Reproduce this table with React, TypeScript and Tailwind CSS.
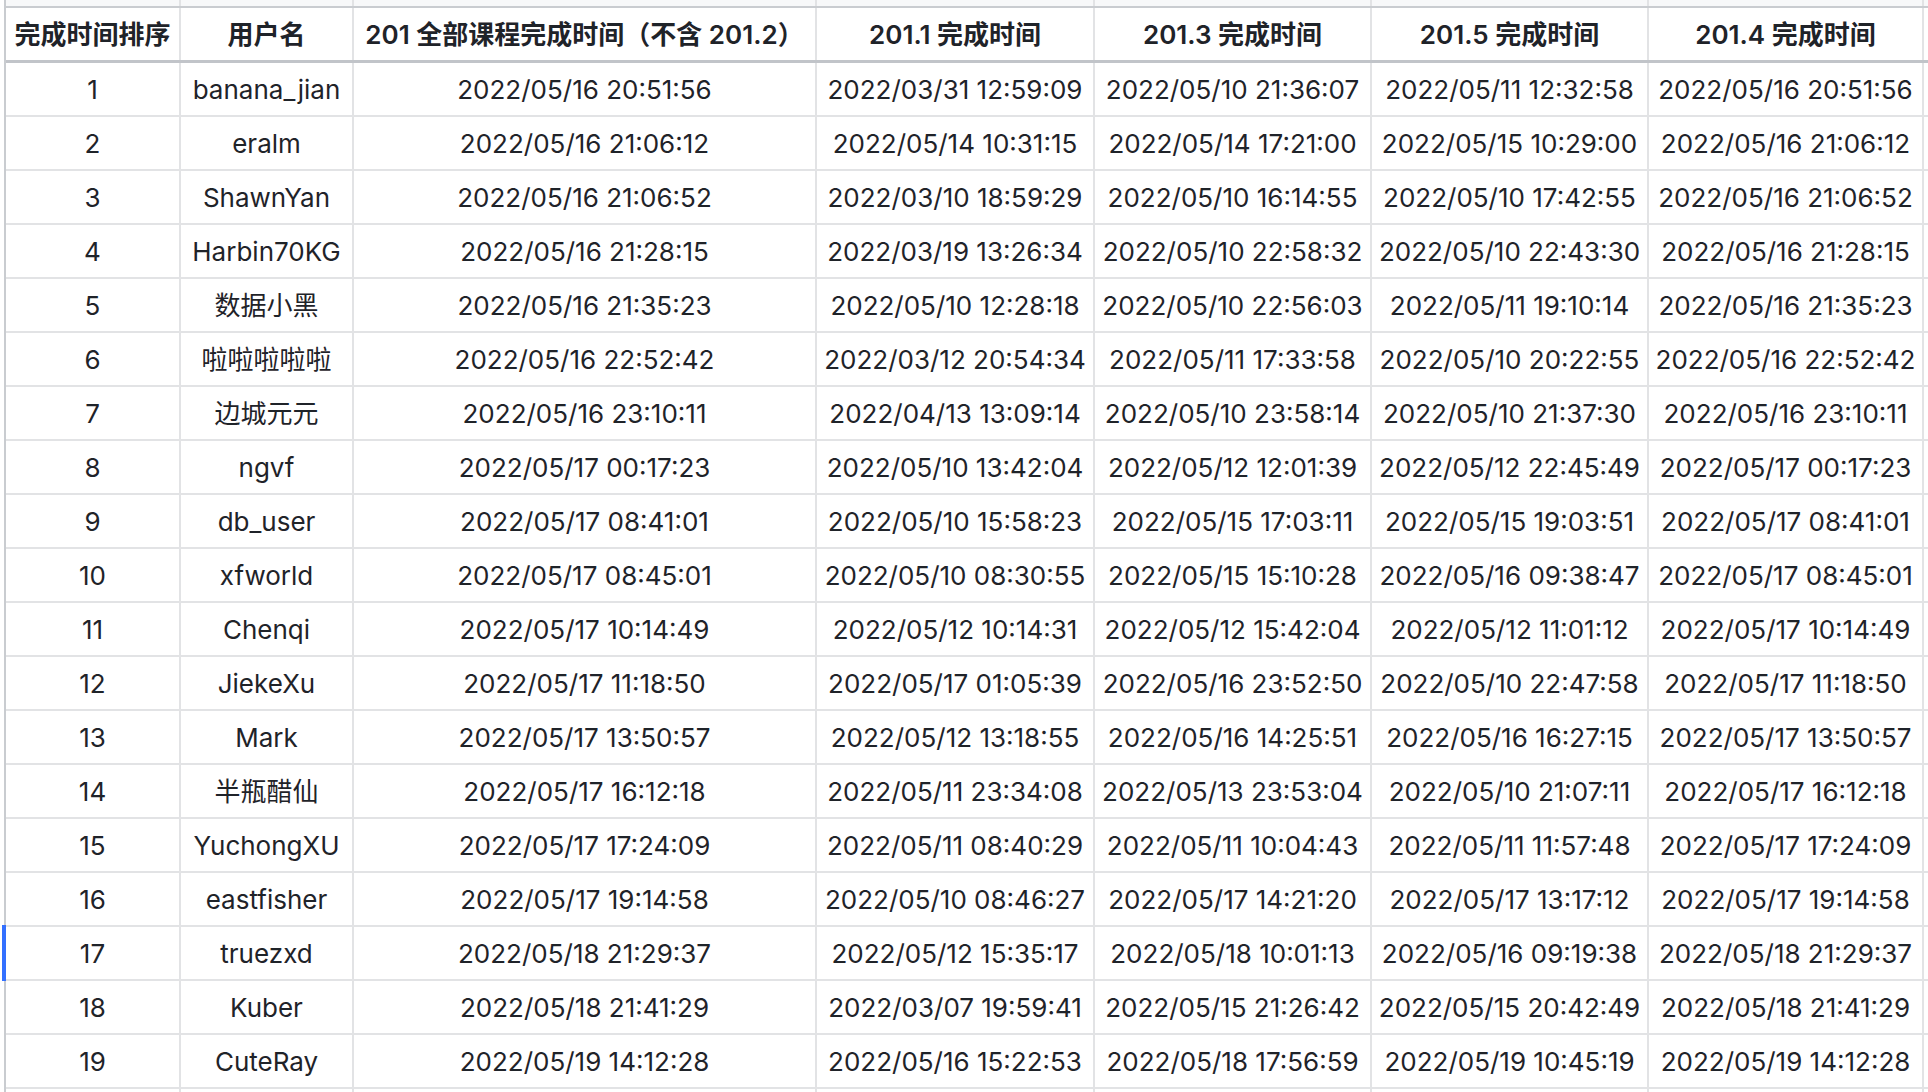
import React from 'react';

const columns = [
  { title: '完成时间排序', width: 'w-[175px]' },
  { title: '用户名', width: 'w-[173px]' },
  { title: '201 全部课程完成时间（不含 201.2）', width: 'w-[463px]' },
  { title: '201.1 完成时间', width: 'w-[278px]' },
  { title: '201.3 完成时间', width: 'w-[277px]' },
  { title: '201.5 完成时间', width: 'w-[277px]' },
  { title: '201.4 完成时间', width: 'w-[275px]' },
];

// [user, all(=201.4), 201.1, 201.3, 201.5]
const rows: string[][] = [
  ['banana_jian', '2022/05/16 20:51:56', '2022/03/31 12:59:09', '2022/05/10 21:36:07', '2022/05/11 12:32:58'],
  ['eralm', '2022/05/16 21:06:12', '2022/05/14 10:31:15', '2022/05/14 17:21:00', '2022/05/15 10:29:00'],
  ['ShawnYan', '2022/05/16 21:06:52', '2022/03/10 18:59:29', '2022/05/10 16:14:55', '2022/05/10 17:42:55'],
  ['Harbin70KG', '2022/05/16 21:28:15', '2022/03/19 13:26:34', '2022/05/10 22:58:32', '2022/05/10 22:43:30'],
  ['数据小黑', '2022/05/16 21:35:23', '2022/05/10 12:28:18', '2022/05/10 22:56:03', '2022/05/11 19:10:14'],
  ['啦啦啦啦啦', '2022/05/16 22:52:42', '2022/03/12 20:54:34', '2022/05/11 17:33:58', '2022/05/10 20:22:55'],
  ['边城元元', '2022/05/16 23:10:11', '2022/04/13 13:09:14', '2022/05/10 23:58:14', '2022/05/10 21:37:30'],
  ['ngvf', '2022/05/17 00:17:23', '2022/05/10 13:42:04', '2022/05/12 12:01:39', '2022/05/12 22:45:49'],
  ['db_user', '2022/05/17 08:41:01', '2022/05/10 15:58:23', '2022/05/15 17:03:11', '2022/05/15 19:03:51'],
  ['xfworld', '2022/05/17 08:45:01', '2022/05/10 08:30:55', '2022/05/15 15:10:28', '2022/05/16 09:38:47'],
  ['Chenqi', '2022/05/17 10:14:49', '2022/05/12 10:14:31', '2022/05/12 15:42:04', '2022/05/12 11:01:12'],
  ['JiekeXu', '2022/05/17 11:18:50', '2022/05/17 01:05:39', '2022/05/16 23:52:50', '2022/05/10 22:47:58'],
  ['Mark', '2022/05/17 13:50:57', '2022/05/12 13:18:55', '2022/05/16 14:25:51', '2022/05/16 16:27:15'],
  ['半瓶醋仙', '2022/05/17 16:12:18', '2022/05/11 23:34:08', '2022/05/13 23:53:04', '2022/05/10 21:07:11'],
  ['YuchongXU', '2022/05/17 17:24:09', '2022/05/11 08:40:29', '2022/05/11 10:04:43', '2022/05/11 11:57:48'],
  ['eastfisher', '2022/05/17 19:14:58', '2022/05/10 08:46:27', '2022/05/17 14:21:20', '2022/05/17 13:17:12'],
  ['truezxd', '2022/05/18 21:29:37', '2022/05/12 15:35:17', '2022/05/18 10:01:13', '2022/05/16 09:19:38'],
  ['Kuber', '2022/05/18 21:41:29', '2022/03/07 19:59:41', '2022/05/15 21:26:42', '2022/05/15 20:42:49'],
  ['CuteRay', '2022/05/19 14:12:28', '2022/05/16 15:22:53', '2022/05/18 17:56:59', '2022/05/19 10:45:19'],
];

function Row({ cells, active, first }: { cells: string[]; active?: boolean; first?: boolean }) {
  return (
    <div className={`relative flex ${first ? 'h-[54px]' : 'h-[54px]'} border-b-2 border-[#e2e3e5]`}>
      {active && <div className="absolute left-[-4px] top-[-2px] h-[56px] w-[4px] bg-[#3370ff]" />}
      {columns.map((col, i) => (
        <div
          key={i}
          className={`${col.width} shrink-0 flex items-center justify-center border-r-2 border-[#e2e3e5] whitespace-nowrap`}
        >
          {cells[i]}
        </div>
      ))}
    </div>
  );
}

export default function App() {
  return (
    <div className="h-screen overflow-hidden bg-white pl-[4px] font-[Inter,'Noto_Sans_CJK_SC',sans-serif] text-[26px] text-[#1f2329]">
      <div className="border-l-2 border-[#c9ccd0]">
        {/* frozen strip above header */}
        <div className="flex h-[6px] bg-[#f7f8f9]">
          {columns.map((col, i) => (
            <div key={i} className={`${col.width} shrink-0 border-r-2 border-[#e2e3e5]`} />
          ))}
        </div>
        <div className="h-[2px] bg-[#c9ccd0]" />

        {/* Header */}
        <div className="flex h-[55px] border-b-[3px] border-[#c1c4c9] font-semibold">
          {columns.map((col, i) => (
            <div
              key={i}
              className={`${col.width} shrink-0 flex items-center justify-center border-r-2 border-[#e2e3e5] whitespace-nowrap`}
            >
              {col.title}
            </div>
          ))}
        </div>

        {rows.map((r, idx) => (
          <Row
            key={idx}
            active={idx === 16}
            cells={[String(idx + 1), r[0], r[1], r[2], r[3], r[4], r[1]]}
          />
        ))}
        <Row cells={['', '', '', '', '', '', '']} />
      </div>
    </div>
  );
}
